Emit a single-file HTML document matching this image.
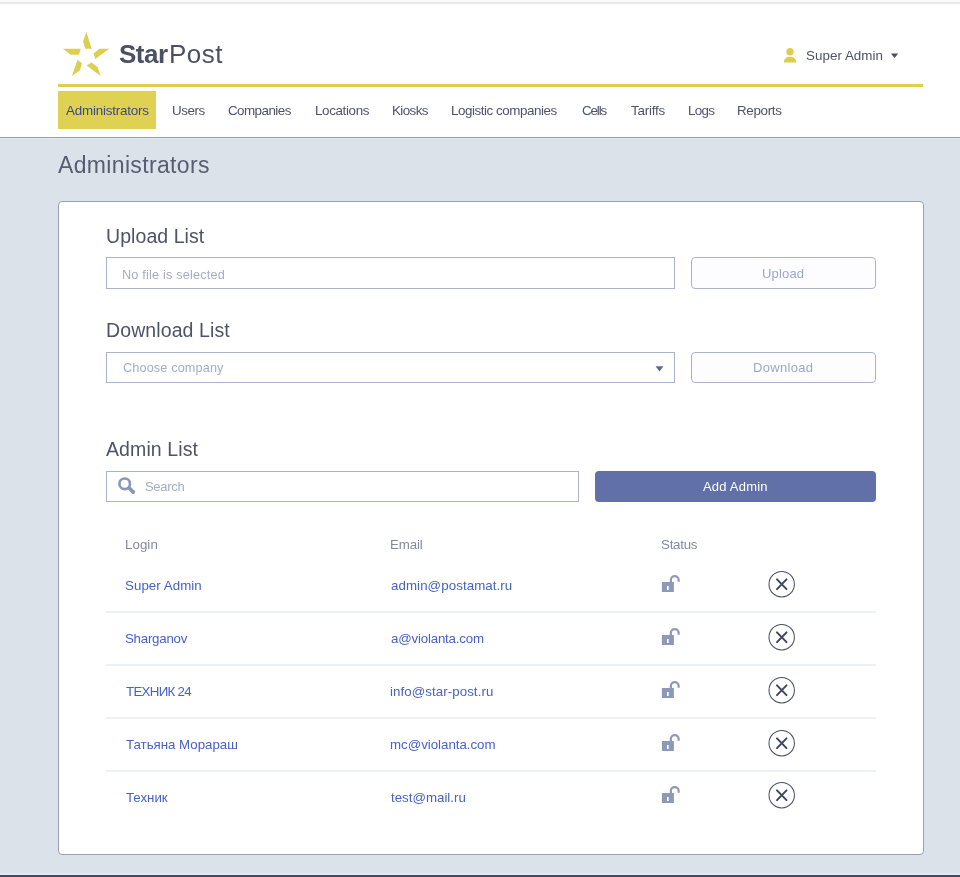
<!DOCTYPE html>
<html><head><meta charset="utf-8"><style>
html,body{margin:0;padding:0;}
body{width:960px;height:877px;position:relative;overflow:hidden;background:#fff;font-family:"Liberation Sans",sans-serif;}
.abs{position:absolute;}
.t{position:absolute;white-space:pre;line-height:1;will-change:transform;}
</style></head><body>
<div class="abs" style="left:0;top:0;width:960px;height:2px;background:#fafafa"></div>
<div class="abs" style="left:0;top:2px;width:960px;height:2px;background:#e8e8e8"></div>
<div class="abs" style="left:0;top:137px;width:960px;height:1px;background:#979eb6"></div>
<div class="abs" style="left:0;top:138px;width:960px;height:735px;background:#dce2ea"></div>
<div class="abs" style="left:0;top:138px;width:960px;height:1px;background:#e3e7ee"></div>
<div class="abs" style="left:0;top:873px;width:960px;height:2px;background:#e6eaf0"></div>
<div class="abs" style="left:0;top:875px;width:960px;height:2px;background:#454a5e"></div>
<svg class="abs" style="left:0;top:0" width="240" height="90" viewBox="0 0 240 90">
<g fill="#dccf4f">
<polygon points="86.4,31.9 91.7,48.7 85.2,48.7 83.1,41.3"/>
<polygon points="63,48.7 80.7,48.7 79,54.7 70.7,54.7"/>
<polygon points="109.2,48.7 99.4,48.7 93.5,53.5 95.3,59.1"/>
<polygon points="71.9,76 77.5,59.7 81.9,63.3 79.9,70.4"/>
<polygon points="100.6,76 97.6,67.1 91.4,62.4 86.7,65.6"/>
</g></svg>
<svg class="abs" style="left:780px;top:44px" width="20" height="22" viewBox="0 0 20 22">
<circle cx="10" cy="7.7" r="3.7" fill="#dccf4f"/>
<path d="M3.8 18.5 C3.8 14.5 6.5 12.7 10 12.7 C13.5 12.7 16.2 14.5 16.2 18.5 Z" fill="#dccf4f"/>
</svg>
<svg class="abs" style="left:890px;top:52px" width="10" height="8" viewBox="0 0 10 8">
<polygon points="0.9,1.4 8.2,1.4 4.6,6" fill="#485068"/>
</svg>
<div class="abs" style="left:58px;top:84px;width:865px;height:3px;background:#dccf4f"></div>
<div class="abs" style="left:58px;top:91px;width:98px;height:38px;background:#dfd253"></div>
<div class="abs" style="left:58px;top:201px;width:864px;height:652px;background:#fff;border:1px solid #9aa0b7;border-radius:4px"></div>
<div class="abs" style="left:106px;top:257px;width:567px;height:30px;border:1px solid #abb3cc"></div>
<div class="abs" style="left:691px;top:257px;width:183px;height:30px;border:1px solid #abb3cc;border-radius:4px;background:#fdfdff"></div>
<div class="abs" style="left:106px;top:352px;width:567px;height:29px;border:1px solid #abb3cc"></div>
<svg class="abs" style="left:650px;top:360px" width="20" height="16" viewBox="0 0 20 16">
<polygon points="5.6,6.3 13.4,6.3 9.5,11.6" fill="#5a66a0"/>
</svg>
<div class="abs" style="left:691px;top:352px;width:183px;height:29px;border:1px solid #abb3cc;border-radius:4px;background:#fdfdff"></div>
<div class="abs" style="left:106px;top:471px;width:471px;height:29px;border:1px solid #abb3cc"></div>
<svg class="abs" style="left:110px;top:470px" width="30" height="30" viewBox="0 0 30 30">
<circle cx="14.7" cy="13.8" r="5.3" fill="none" stroke="#8a97b8" stroke-width="2.7"/>
<path d="M19.2 18 L23.2 22.1" stroke="#8a97b8" stroke-width="3.8" stroke-linecap="round"/>
</svg>
<div class="abs" style="left:595px;top:471px;width:281px;height:31px;background:#6170a8;border-radius:4px"></div>
<svg class="abs" style="left:655px;top:570.2px" width="40" height="30" viewBox="0 0 40 30">
<rect x="6.9" y="12" width="12" height="10" fill="#8e99b8"/>
<rect x="12" y="16" width="1.7" height="4" fill="#fff"/>
<path d="M15.85 12.5 V10.1 A3.9 3.9 0 0 1 23.65 10.1 V11.7" fill="none" stroke="#8e99b8" stroke-width="2.2"/>
</svg>
<svg class="abs" style="left:765px;top:568.2px" width="34" height="34" viewBox="0 0 34 34">
<circle cx="16.7" cy="16.2" r="12.7" fill="none" stroke="#4a5068" stroke-width="1.05"/>
<path d="M12 11.4 L21.5 21.1 M21.5 11.4 L12 21.1" stroke="#3f465e" stroke-width="2" stroke-linecap="round"/>
</svg><div class="abs" style="left:106px;top:611px;width:770px;height:2px;background:#edf0f5"></div><svg class="abs" style="left:655px;top:623.0px" width="40" height="30" viewBox="0 0 40 30">
<rect x="6.9" y="12" width="12" height="10" fill="#8e99b8"/>
<rect x="12" y="16" width="1.7" height="4" fill="#fff"/>
<path d="M15.85 12.5 V10.1 A3.9 3.9 0 0 1 23.65 10.1 V11.7" fill="none" stroke="#8e99b8" stroke-width="2.2"/>
</svg>
<svg class="abs" style="left:765px;top:621.0px" width="34" height="34" viewBox="0 0 34 34">
<circle cx="16.7" cy="16.2" r="12.7" fill="none" stroke="#4a5068" stroke-width="1.05"/>
<path d="M12 11.4 L21.5 21.1 M21.5 11.4 L12 21.1" stroke="#3f465e" stroke-width="2" stroke-linecap="round"/>
</svg><div class="abs" style="left:106px;top:664px;width:770px;height:2px;background:#edf0f5"></div><svg class="abs" style="left:655px;top:675.8px" width="40" height="30" viewBox="0 0 40 30">
<rect x="6.9" y="12" width="12" height="10" fill="#8e99b8"/>
<rect x="12" y="16" width="1.7" height="4" fill="#fff"/>
<path d="M15.85 12.5 V10.1 A3.9 3.9 0 0 1 23.65 10.1 V11.7" fill="none" stroke="#8e99b8" stroke-width="2.2"/>
</svg>
<svg class="abs" style="left:765px;top:673.8px" width="34" height="34" viewBox="0 0 34 34">
<circle cx="16.7" cy="16.2" r="12.7" fill="none" stroke="#4a5068" stroke-width="1.05"/>
<path d="M12 11.4 L21.5 21.1 M21.5 11.4 L12 21.1" stroke="#3f465e" stroke-width="2" stroke-linecap="round"/>
</svg><div class="abs" style="left:106px;top:717px;width:770px;height:2px;background:#edf0f5"></div><svg class="abs" style="left:655px;top:728.6px" width="40" height="30" viewBox="0 0 40 30">
<rect x="6.9" y="12" width="12" height="10" fill="#8e99b8"/>
<rect x="12" y="16" width="1.7" height="4" fill="#fff"/>
<path d="M15.85 12.5 V10.1 A3.9 3.9 0 0 1 23.65 10.1 V11.7" fill="none" stroke="#8e99b8" stroke-width="2.2"/>
</svg>
<svg class="abs" style="left:765px;top:726.6px" width="34" height="34" viewBox="0 0 34 34">
<circle cx="16.7" cy="16.2" r="12.7" fill="none" stroke="#4a5068" stroke-width="1.05"/>
<path d="M12 11.4 L21.5 21.1 M21.5 11.4 L12 21.1" stroke="#3f465e" stroke-width="2" stroke-linecap="round"/>
</svg><div class="abs" style="left:106px;top:770px;width:770px;height:2px;background:#edf0f5"></div><svg class="abs" style="left:655px;top:781.4px" width="40" height="30" viewBox="0 0 40 30">
<rect x="6.9" y="12" width="12" height="10" fill="#8e99b8"/>
<rect x="12" y="16" width="1.7" height="4" fill="#fff"/>
<path d="M15.85 12.5 V10.1 A3.9 3.9 0 0 1 23.65 10.1 V11.7" fill="none" stroke="#8e99b8" stroke-width="2.2"/>
</svg>
<svg class="abs" style="left:765px;top:779.4px" width="34" height="34" viewBox="0 0 34 34">
<circle cx="16.7" cy="16.2" r="12.7" fill="none" stroke="#4a5068" stroke-width="1.05"/>
<path d="M12 11.4 L21.5 21.1 M21.5 11.4 L12 21.1" stroke="#3f465e" stroke-width="2" stroke-linecap="round"/>
</svg>
<div class="t" style="left:118.80px;top:41.19px;font-size:26px;letter-spacing:-0.5px;color:#4b5064;font-weight:700">Star</div>
<div class="t" style="left:169.30px;top:41.19px;font-size:26px;letter-spacing:0.5px;color:#4b5064;font-weight:400">Post</div>
<div class="t" style="left:65.70px;top:103.56px;font-size:13.4px;letter-spacing:-0.208px;color:#3d4a7e;font-weight:400">Administrators</div>
<div class="t" style="left:171.50px;top:103.56px;font-size:13.4px;letter-spacing:-0.45px;color:#4d536a;font-weight:400">Users</div>
<div class="t" style="left:228.00px;top:103.56px;font-size:13.4px;letter-spacing:-0.55px;color:#4d536a;font-weight:400">Companies</div>
<div class="t" style="left:314.60px;top:103.56px;font-size:13.4px;letter-spacing:-0.356px;color:#4d536a;font-weight:400">Locations</div>
<div class="t" style="left:392.00px;top:103.56px;font-size:13.4px;letter-spacing:-0.6px;color:#4d536a;font-weight:400">Kiosks</div>
<div class="t" style="left:451.00px;top:103.56px;font-size:13.4px;letter-spacing:-0.447px;color:#4d536a;font-weight:400">Logistic companies</div>
<div class="t" style="left:581.70px;top:103.56px;font-size:13.4px;letter-spacing:-1.125px;color:#4d536a;font-weight:400">Cells</div>
<div class="t" style="left:631.20px;top:103.56px;font-size:13.4px;letter-spacing:-0.2px;color:#4d536a;font-weight:400">Tariffs</div>
<div class="t" style="left:687.60px;top:103.56px;font-size:13.4px;letter-spacing:-0.7px;color:#4d536a;font-weight:400">Logs</div>
<div class="t" style="left:737.00px;top:103.56px;font-size:13.4px;letter-spacing:-0.333px;color:#4d536a;font-weight:400">Reports</div>
<div class="t" style="left:805.70px;top:49.46px;font-size:13.4px;letter-spacing:0.03px;color:#4d536a;font-weight:400">Super Admin</div>
<div class="t" style="left:58.00px;top:153.73px;font-size:23px;letter-spacing:0.338px;color:#575e74;font-weight:400">Administrators</div>
<div class="t" style="left:105.60px;top:226.69px;font-size:19.5px;letter-spacing:0.07px;color:#4d536a;font-weight:400">Upload List</div>
<div class="t" style="left:122.00px;top:268.75px;font-size:12.7px;letter-spacing:0.183px;color:#a3adc8;font-weight:400">No file is selected</div>
<div class="t" style="left:761.80px;top:266.80px;font-size:13px;letter-spacing:0.16px;color:#9ca7cc;font-weight:400">Upload</div>
<div class="t" style="left:105.60px;top:321.09px;font-size:19.5px;letter-spacing:0.1px;color:#4d536a;font-weight:400">Download List</div>
<div class="t" style="left:123.00px;top:362.05px;font-size:12.7px;letter-spacing:0.131px;color:#a3adc8;font-weight:400">Choose company</div>
<div class="t" style="left:753.20px;top:361.20px;font-size:13px;letter-spacing:0.314px;color:#9ca7cc;font-weight:400">Download</div>
<div class="t" style="left:106.10px;top:440.29px;font-size:19.5px;letter-spacing:0.1px;color:#4d536a;font-weight:400">Admin List</div>
<div class="t" style="left:145.40px;top:480.00px;font-size:13px;letter-spacing:-0.3px;color:#a3adc8;font-weight:400">Search</div>
<div class="t" style="left:702.70px;top:480.00px;font-size:13px;letter-spacing:0.2px;color:#ffffff;font-weight:400">Add Admin</div>
<div class="t" style="left:124.75px;top:538.34px;font-size:13.3px;letter-spacing:0.062px;color:#8089a6;font-weight:400">Login</div>
<div class="t" style="left:389.90px;top:538.34px;font-size:13.3px;letter-spacing:-0.15px;color:#8089a6;font-weight:400">Email</div>
<div class="t" style="left:660.70px;top:538.34px;font-size:13.3px;letter-spacing:-0.24px;color:#8089a6;font-weight:400">Status</div>
<div class="t" style="left:124.50px;top:579.14px;font-size:13.3px;letter-spacing:0.06px;color:#4862c4;font-weight:400">Super Admin</div>
<div class="t" style="left:390.90px;top:579.14px;font-size:13.3px;letter-spacing:0.081px;color:#4862c4;font-weight:400">admin@postamat.ru</div>
<div class="t" style="left:124.50px;top:631.99px;font-size:13.3px;letter-spacing:-0.25px;color:#4862c4;font-weight:400">Sharganov</div>
<div class="t" style="left:390.90px;top:631.99px;font-size:13.3px;letter-spacing:-0.192px;color:#4862c4;font-weight:400">a@violanta.com</div>
<div class="t" style="left:125.50px;top:684.84px;font-size:13.3px;letter-spacing:-0.7px;color:#4862c4;font-weight:400">ТЕХНИК 24</div>
<div class="t" style="left:389.90px;top:684.84px;font-size:13.3px;letter-spacing:0.069px;color:#4862c4;font-weight:400">info@star-post.ru</div>
<div class="t" style="left:125.50px;top:737.69px;font-size:13.3px;letter-spacing:-0.021px;color:#4862c4;font-weight:400">Татьяна Морараш</div>
<div class="t" style="left:389.90px;top:737.69px;font-size:13.3px;letter-spacing:-0.021px;color:#4862c4;font-weight:400">mc@violanta.com</div>
<div class="t" style="left:125.50px;top:790.54px;font-size:13.3px;letter-spacing:-0.02px;color:#4862c4;font-weight:400">Техник</div>
<div class="t" style="left:390.90px;top:790.54px;font-size:13.3px;letter-spacing:0.0px;color:#4862c4;font-weight:400">test@mail.ru</div>
</body></html>
